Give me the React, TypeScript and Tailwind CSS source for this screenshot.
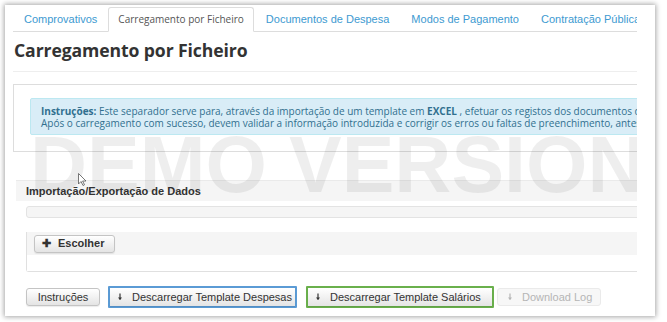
import React from 'react';

const tabs = ['Comprovativos', 'Carregamento por Ficheiro', 'Documentos de Despesa', 'Modos de Pagamento', 'Contratação Pública'];

function DownArrow({ color = '#333' }: { color?: string }) {
  return (
    <svg width="6" height="8" viewBox="0 0 6 8" className="mr-[9px]">
      <path d="M3 0.5V6.5" stroke={color} strokeWidth="1.2" />
      <path d="M1 4.5L3 7L5 4.5Z" fill={color} />
    </svg>
  );
}

function Btn({ children, className = '' }: { children: React.ReactNode; className?: string }) {
  return (
    <button
      className={`h-[18px] flex items-center rounded-[3px] border border-[#c4c4c4] bg-gradient-to-b from-white to-[#e4e4e4] text-[11px] text-[#333] font-['Liberation_Sans',Arial,sans-serif] shadow-[0_1px_1px_rgba(0,0,0,0.08)] ${className}`}
    >
      {children}
    </button>
  );
}

export default function App() {
  return (
    <div className="w-[667px] h-[322px] bg-white overflow-hidden pt-[5px] pl-[5px]">
      <div className="w-[650px] h-[311px] bg-white shadow-[0_0_5px_1px_rgba(0,0,0,0.35)] flex">
        <div className="relative ml-2 w-[624px] overflow-hidden pt-[2px]">
          {/* ── Tabs ── */}
          <ul className="flex border-b border-[#ddd] h-[25px] w-[700px]">
            {tabs.map((t, i) =>
              i === 1 ? (
                <li
                  key={t}
                  className="h-[25px] -mb-px px-[9px] mr-[12px] flex items-center bg-white border border-[#ddd] border-b-white rounded-t-[3px] text-[10px] text-[#555] font-['Open_Sans',sans-serif]"
                >
                  {t}
                </li>
              ) : (
                <li
                  key={t}
                  className={`h-[24px] flex items-center text-[11px] text-[#3d9ad1] font-['Liberation_Sans',Arial,sans-serif] ${
                    i === 0 ? 'pl-[11px] pr-[11px]' : 'mr-[22px]'
                  }`}
                >
                  {t}
                </li>
              )
            )}
          </ul>

          {/* ── Title ── */}
          <h1 className="mt-[8px] ml-px h-[20px] leading-[20px] text-[17.6px] font-bold text-[#333] font-['Open_Sans',sans-serif] tracking-[-0.1px]">
            Carregamento por Ficheiro
          </h1>
          <div className="mt-[11px] border-t border-[#eee]" />

          {/* ── Instructions box ── */}
          <div className="mt-[12px] h-[68px] w-[640px] border border-[#ddd] pt-[13px] pl-[16px]">
            <div className="h-[37px] w-[640px] bg-[#d9edf7] border border-[#bce8f1] rounded-[2px] pl-[10px] pt-[6px] text-[10px] leading-[12px] text-[#31708f] font-['Open_Sans',sans-serif] whitespace-nowrap">
              <p>
                <b>Instruções:</b> Este separador serve para, através da importação de um template em <b>EXCEL</b> , efetuar os registos dos documentos de despesa
              </p>
              <p>
                Após o carregamento com sucesso, devem validar a informação introduzida e corrigir os erros ou faltas de preenchimento, antes de submeter
              </p>
            </div>
          </div>

          {/* ── Import / export ── */}
          <div className="mt-[28px] ml-[3px] h-[21px] w-[640px] bg-[#f5f5f5] border-t border-[#eaeaea] flex items-center pl-[10px] text-[11px] font-bold text-[#333] font-['Liberation_Sans',Arial,sans-serif]">
            Importação/Exportação de Dados
          </div>

          <div className="ml-[13px]">
            <div className="mt-[5px] h-[12px] w-[640px] bg-[#f5f5f5] border border-[#e3e3e3] rounded-[3px]" />

            <div className="mt-[14px] w-[640px] border-b border-l border-[#e0e0e0] rounded-bl-[3px]">
              <div className="h-[23px] bg-[#f5f5f5] flex items-center pl-[7px]">
                <Btn className="w-[81px] h-[17px] pl-[7px] font-bold">
                  <span className="mr-[7px] text-[11px] leading-none">✚</span>
                  Escolher
                </Btn>
              </div>
              <div className="h-[16px] bg-white" />
            </div>

            {/* ── Actions ── */}
            <div className="mt-[14px] flex items-center">
              <Btn className="w-[74px] justify-center">Instruções</Btn>
              <div className="ml-[8px] border-2 border-[#5b9bd5] rounded-[1px]">
                <Btn className="w-[185px] h-[16px] pl-[7px] rounded-none border-0">
                  <DownArrow />
                  Descarregar Template Despesas
                </Btn>
              </div>
              <div className="ml-[9px] border-2 border-[#6ab04c] rounded-[1px]">
                <Btn className="w-[184px] h-[16px] pl-[7px] rounded-none border-0">
                  <DownArrow />
                  Descarregar Template Salários
                </Btn>
              </div>
              <button className="ml-[3px] w-[104px] h-[18px] flex items-center pl-[9px] rounded-[3px] border border-[#eaeaea] bg-[#f7f7f7] text-[11px] text-[#b5b5b5] font-['Liberation_Sans',Arial,sans-serif]">
                <DownArrow color="#b5b5b5" />
                Download Log
              </button>
            </div>
          </div>

          {/* ── Watermark ── */}
          <div className="pointer-events-none absolute left-[17px] top-[120px] whitespace-nowrap text-[79px] leading-[79px] font-bold text-black/[0.065] font-['Liberation_Sans',Arial,sans-serif]">
            DEMO VERSION
          </div>

          {/* ── Cursor ── */}
          <svg className="pointer-events-none absolute left-[65px] top-[168px]" width="9" height="13" viewBox="0 0 9 13">
            <path d="M0.5 0.5V11L3 8.5L5 12.5L6.5 11.8L4.6 8H8Z" fill="white" stroke="#555" strokeWidth="0.8" />
          </svg>
        </div>
      </div>
    </div>
  );
}
